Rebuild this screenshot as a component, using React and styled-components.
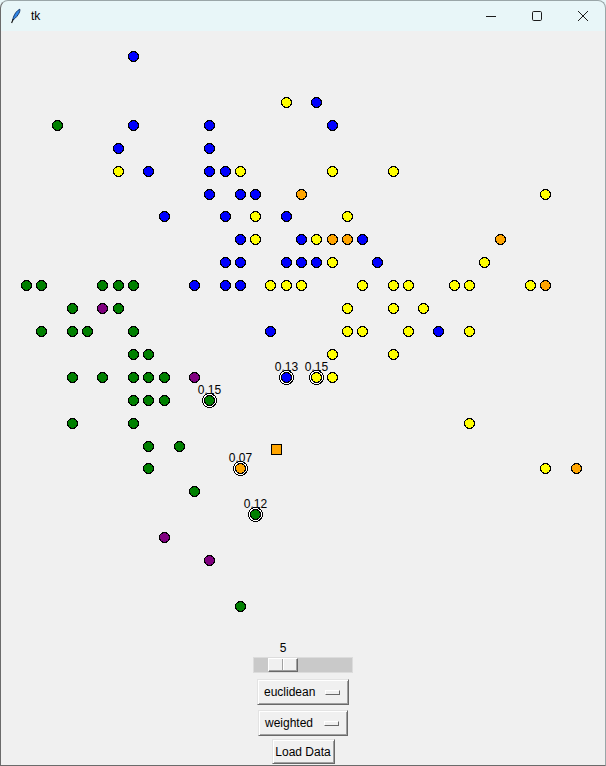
import React from "react";
import styled, { createGlobalStyle } from "styled-components";

const GlobalStyle = createGlobalStyle`
  html, body {
    margin: 0;
    padding: 0;
    background: #f0f0f0;
  }
  body {
    font-family: "Liberation Sans", Arial, sans-serif;
  }
`;

const COLORS = {
  B: "#0000ff",
  Y: "#ffff00",
  G: "#008000",
  O: "#ffa500",
  P: "#800080",
};

// each row: y, then colour+x for every point on it
const rows = [
  [56, "B133"],
  [102, "Y286 B316"],
  [125, "G57 B133 B209 B332"],
  [148, "B118 B209"],
  [171, "Y118 B148 B209 B225 Y240 Y332 Y393"],
  [194, "B209 B240 B255 O301 Y545"],
  [216, "B164 B225 Y255 B286 Y347"],
  [239, "B240 Y255 B301 Y316 O332 O347 B362 O500"],
  [262, "B225 B240 B286 B301 B316 Y332 B377 Y484"],
  [285, "G26 G41 G102 G118 G133 B194 B225 B240 Y270 Y286 Y301 Y362 Y393 Y408 Y454 Y469 Y530 O545"],
  [308, "G72 P102 G118 Y347 Y393 Y423"],
  [331, "G41 G72 G87 G133 B270 Y347 Y362 Y408 B438 Y469"],
  [354, "G133 G148 Y332 Y393"],
  [377, "G72 G102 G133 G148 G164 P194 B286 Y316 Y332"],
  [400, "G133 G148 G164 G209"],
  [423, "G72 G133 Y469"],
  [446, "G148 G179"],
  [468, "G148 O240 Y545 O576"],
  [491, "G194"],
  [514, "G255"],
  [537, "P164"],
  [560, "P209"],
  [606, "G240"],
];

const points = rows.flatMap(([y, list]) =>
  list.split(" ").map((s) => ({ x: Number(s.slice(1)), y, color: COLORS[s[0]] }))
);

const neighbours = [
  { x: 286, y: 377, label: "0.13" },
  { x: 316, y: 377, label: "0.15" },
  { x: 209, y: 400, label: "0.15" },
  { x: 240, y: 468, label: "0.07" },
  { x: 255, y: 514, label: "0.12" },
];

const query = { x: 276, y: 449 };

export default function App() {
  return (
    <>
      <GlobalStyle />
      <Window>
        <TitleBar>
          <AppIcon>
            <svg width="16" height="16" viewBox="0 0 16 16">
              <path
                d="M11.8 1.2 C9 2.5 6.6 5.6 5.4 9.2 L4.6 12.2 C6.4 11 8.6 9.2 10.2 6.6 C11.4 4.7 12.2 2.8 11.8 1.2 Z"
                fill="#2f86e8"
                stroke="#0b2a5a"
                strokeWidth="0.9"
              />
              <path d="M5.2 11.2 L3.6 15" stroke="#111" strokeWidth="1.1" />
            </svg>
          </AppIcon>
          <Title>tk</Title>
          <WinButtons>
            <WinButton>
              <svg width="12" height="12" viewBox="0 0 12 12">
                <path d="M1 6.5 H11" stroke="#1b1b1b" strokeWidth="1" />
              </svg>
            </WinButton>
            <WinButton>
              <svg width="12" height="12" viewBox="0 0 12 12">
                <rect x="1.5" y="1.5" width="9" height="9" rx="1.2" fill="none" stroke="#1b1b1b" strokeWidth="1" />
              </svg>
            </WinButton>
            <WinButton>
              <svg width="12" height="12" viewBox="0 0 12 12">
                <path d="M1 1 L11 11 M11 1 L1 11" stroke="#1b1b1b" strokeWidth="1" />
              </svg>
            </WinButton>
          </WinButtons>
        </TitleBar>

        <Canvas width="606" height="606" viewBox="0 31 606 606">
          {neighbours.map((n, i) => (
            <Dot
              key={"ring" + i}
              cx={n.x + 0.5}
              cy={n.y + 0.5}
              r="7"
              fill="#ffffff"
            />
          ))}
          {points.map((p, i) => (
            <Dot key={i} cx={p.x + 0.5} cy={p.y + 0.5} r="5" fill={p.color} />
          ))}
          {neighbours.map((n, i) => (
            <Label key={"lbl" + i} x={n.x + 0.5} y={n.y - 6}>
              {n.label}
            </Label>
          ))}
          <Square
            x={query.x - 4.5}
            y={query.y - 4.5}
            width="10"
            height="10"
            fill="#ffa500"
          />
        </Canvas>

        <Controls>
          <Scale>
            <ScaleValue $offset={26}>5</ScaleValue>
            <Trough>
              <Slider $offset={14} />
            </Trough>
          </Scale>
          <OptionMenu $width={92}>
            <span>euclidean</span>
            <Indicator />
          </OptionMenu>
          <OptionMenu $width={90}>
            <span>weighted</span>
            <Indicator />
          </OptionMenu>
          <PushButton>Load Data</PushButton>
        </Controls>
      </Window>
    </>
  );
}

const Window = styled.div`
  position: relative;
  width: 606px;
  height: 766px;
  display: flex;
  flex-direction: column;
  overflow: hidden;
  background: #f0f0f0;

  &::after {
    content: "";
    position: absolute;
    inset: 0;
    border: 1px solid #6b6b6b;
    border-top-color: #9aa6a8;
    border-right-color: #9aa6a8;
    border-radius: 8px 8px 0 0;
    pointer-events: none;
  }
`;

const TitleBar = styled.div`
  height: 31px;
  flex: none;
  display: flex;
  align-items: center;
  background: #e8f6f8;
`;

const AppIcon = styled.div`
  width: 16px;
  height: 16px;
  margin-left: 8px;
  display: flex;
`;

const Title = styled.div`
  margin-left: 7px;
  font-family: "Liberation Sans", Arial, sans-serif;
  font-size: 12px;
  color: #000;
  flex: 1;
`;

const WinButtons = styled.div`
  display: flex;
  height: 100%;
`;

const WinButton = styled.div`
  width: 46px;
  height: 100%;
  display: flex;
  align-items: center;
  justify-content: center;
`;

const Canvas = styled.svg`
  display: block;
  flex: none;
`;

const Dot = styled.circle`
  stroke: #000;
  stroke-width: 1;
  shape-rendering: crispEdges;
`;

const Square = styled.rect`
  stroke: #000;
  stroke-width: 1;
  shape-rendering: crispEdges;
`;

const Label = styled.text`
  font-family: "Liberation Sans", Arial, sans-serif;
  font-size: 12px;
  fill: #000;
  text-anchor: middle;
`;

const Controls = styled.div`
  display: flex;
  flex-direction: column;
  align-items: center;
  padding-top: 2px;
  font-family: "Liberation Sans", Arial, sans-serif;
  font-size: 12px;
  color: #000;
`;

const Scale = styled.div`
  width: 100px;
  display: flex;
  flex-direction: column;
  margin-bottom: 6px;
`;

const ScaleValue = styled.div`
  height: 18px;
  line-height: 18px;
  width: 8px;
  text-align: center;
  margin-left: ${(p) => p.$offset}px;
`;

const Trough = styled.div`
  height: 16px;
  box-sizing: border-box;
  background: #c9c9c9;
  border: 1px solid #dcdcdc;
  display: flex;
  align-items: center;
`;

const Slider = styled.div`
  position: relative;
  margin-left: ${(p) => p.$offset}px;
  width: 30px;
  height: 14px;
  box-sizing: border-box;
  background: #f0f0f0;
  border: 1px solid;
  border-color: #ffffff #696969 #696969 #ffffff;
  box-shadow: inset -1px -1px #a0a0a0;

  &::after {
    content: "";
    position: absolute;
    left: 13px;
    top: 0;
    bottom: 1px;
    width: 1px;
    background: #a0a0a0;
    box-shadow: 1px 0 #ffffff;
  }
`;

const OptionMenu = styled.div`
  width: ${(p) => p.$width}px;
  height: 26px;
  box-sizing: border-box;
  margin-bottom: 5px;
  padding: 0 8px 0 6px;
  display: flex;
  align-items: center;
  justify-content: space-between;
  background: #f0f0f0;
  border: 1px solid;
  border-color: #e3e3e3 #696969 #696969 #e3e3e3;
  box-shadow: inset 1px 1px #ffffff, inset -1px -1px #a0a0a0;
`;

const Indicator = styled.div`
  width: 15px;
  height: 5px;
  box-sizing: border-box;
  background: #f0f0f0;
  border: 1px solid;
  border-color: #ffffff #696969 #696969 #ffffff;
`;

const PushButton = styled.div`
  width: 63px;
  height: 25px;
  box-sizing: border-box;
  margin-top: -2px;
  display: flex;
  align-items: center;
  justify-content: center;
  background: #f0f0f0;
  border: 1px solid;
  border-color: #e3e3e3 #696969 #696969 #e3e3e3;
  box-shadow: inset 1px 1px #ffffff, inset -1px -1px #a0a0a0;
`;
